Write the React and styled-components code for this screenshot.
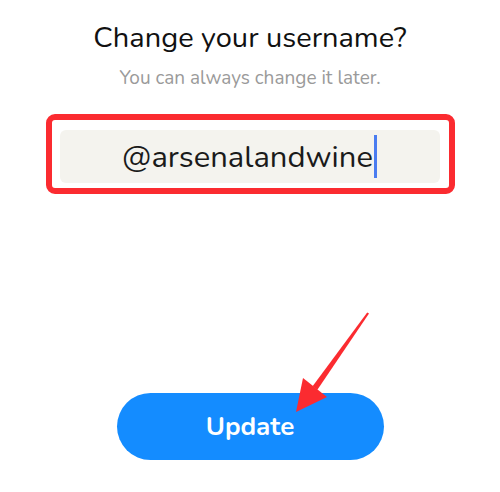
import React from 'react'
import styled, { createGlobalStyle } from 'styled-components'

const Global = createGlobalStyle`
  body {
    margin: 0;
    background: #fff;
    font-family: 'Nunito', 'Lato', 'Noto Sans', sans-serif;
  }
`

const Screen = styled.main`
  position: relative;
  width: 500px;
  height: 492px;
  display: flex;
  flex-direction: column;
  align-items: center;
  overflow: hidden;
`

const Title = styled.h1`
  margin: 20px 0 0;
  font-size: 29px;
  line-height: 36px;
  font-weight: 400;
  color: #111;
`

const Subtitle = styled.p`
  margin: 10px 0 0;
  font-size: 19px;
  line-height: 24px;
  color: #9a9a9a;
`

const Highlight = styled.div`
  margin-top: 24px;
  width: 409px;
  height: 80px;
  box-sizing: border-box;
  border: 6px solid #fb2b30;
  border-radius: 9px;
  padding: 10px 9px 0 8px;
`

const Field = styled.div`
  height: 53px;
  border-radius: 6px;
  background: #f4f3ee;
  display: flex;
  align-items: center;
  justify-content: center;
  font-size: 31px;
  color: #1a1a1a;
`

const Caret = styled.span`
  display: inline-block;
  width: 3px;
  height: 43px;
  margin-left: 1px;
  background: #4a7cf0;
`

const Button = styled.button`
  margin-top: 199px;
  width: 267px;
  height: 67px;
  border: none;
  border-radius: 34px;
  background: #148cff;
  color: #fff;
  font-family: inherit;
  font-size: 26px;
  font-weight: 700;
`

const Pointer = styled.svg`
  position: absolute;
  left: 0;
  top: 0;
  pointer-events: none;
`

export default function App () {
  return (
    <>
      <Global />
      <Screen>
        <Title>Change your username?</Title>
        <Subtitle>You can always change it later.</Subtitle>
        <Highlight>
          <Field>
            @arsenalandwine<Caret />
          </Field>
        </Highlight>
        <Button>Update</Button>
        <Pointer width='500' height='492' viewBox='0 0 500 492'>
          <polygon points='369,313.6 367.2,312.4 312.6,386.2 317.4,389.8' fill='#fb2b30' />
          <polygon points='296,412 303,378 327,397' fill='#fb2b30' />
        </Pointer>
      </Screen>
    </>
  )
}
